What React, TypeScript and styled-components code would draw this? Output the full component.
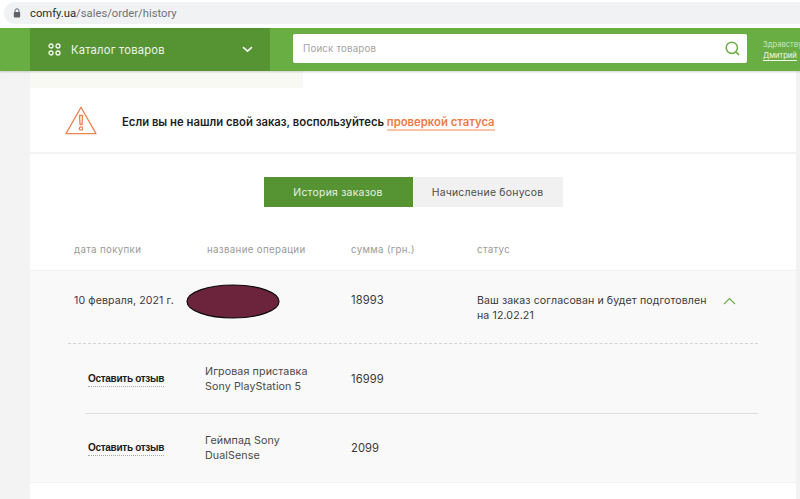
import React from "react";
import styled, { createGlobalStyle } from "styled-components";

const Global = createGlobalStyle`
  html, body { margin: 0; padding: 0; background: #fff; overflow: hidden; }
  * { box-sizing: border-box; }
  body { font-family: Inter, "Noto Sans", sans-serif; }
`;

const Page = styled.div`
  width: 800px;
  height: 499px;
  display: flex;
  flex-direction: column;
  overflow: hidden;
`;

const BrowserBar = styled.div`
  height: 28px;
  flex: none;
  padding: 2px 0 4px 4px;
  background: #fff;
`;

const AddressPill = styled.div`
  height: 22px;
  display: flex;
  align-items: center;
  gap: 5px;
  padding-left: 10px;
  background: #f0f2f4;
  border-radius: 11px 0 0 11px;
  font-family: Roboto, Inter, sans-serif;
  font-size: 11.25px;
  letter-spacing: 0;
  color: #6e7276;
`;

const LockIcon = styled.svg`
  margin-left: -1px;
  margin-right: 4px;
  flex: none;
`;

const Host = styled.span`
  color: #2a2c2e;
`;

const Header = styled.header`
  height: 43px;
  flex: none;
  display: flex;
  padding-left: 30px;
  background: #68ae42;
  box-shadow: 0 1px 2px rgba(0, 0, 0, 0.18);
  position: relative;
  z-index: 1;
`;

const Catalog = styled.div`
  width: 240px;
  flex: none;
  display: flex;
  align-items: center;
  padding: 0 17px 0 18px;
  background: #559333;
  color: #eef5ea;
  font-size: 11.2px;
  letter-spacing: 0.2px;
`;

const CatalogLabel = styled.span`
  margin-left: 10px;
  flex: 1;
`;

const SearchBox = styled.div`
  width: 454px;
  height: 29px;
  flex: none;
  margin: 6px 0 0 23px;
  display: flex;
  align-items: center;
  justify-content: space-between;
  padding: 0 7px 0 10px;
  background: #fff;
  border-radius: 2px;
  color: #a4a4a4;
  font-size: 9.7px;
  letter-spacing: 0.2px;
`;

const Greeting = styled.div`
  margin: 11px 0 0 16px;
  font-size: 7.6px;
  line-height: 11px;
  white-space: nowrap;
  color: #cfe5c3;
`;

const UserName = styled.div`
  color: #f2f8ee;
  text-decoration: underline;
  text-underline-offset: 1.5px;
`;

const Body = styled.div`
  flex: 1;
  display: flex;
  min-height: 0;
`;

const Gutter = styled.div`
  width: 30px;
  background: #f3f3f3;
`;

const Main = styled.main`
  width: 766px;
  background: #fff;
  display: flex;
  flex-direction: column;
`;

const Scroll = styled.div`
  width: 4px;
  background: #f2f2f2;
`;

const Crumb = styled.div`
  width: 273px;
  height: 17px;
  flex: none;
  background: #f9f9f4;
`;

const Notice = styled.div`
  height: 66px;
  flex: none;
  display: flex;
  align-items: center;
  padding: 6px 0 2px 35px;
  border-bottom: 2px solid #f3f3f3;
  font-size: 11.3px;
  font-weight: 600;
  color: #1f1f1f;
`;

const NoticeIcon = styled.svg`
  margin-bottom: 4px;
  flex: none;
`;

const NoticeText = styled.span`
  margin-left: 25px;
`;

const StatusLink = styled.a`
  color: #ef7a45;
  border-bottom: 2px solid #f9c4ab;
`;

const Tabs = styled.div`
  display: flex;
  justify-content: center;
  margin: 23px 0 0 3px;
  padding-right: 3px;
`;

const Tab = styled.div<{ $active?: boolean }>`
  width: ${(p) => (p.$active ? "149px" : "150px")};
  height: 30px;
  display: flex;
  align-items: center;
  justify-content: center;
  font-size: 10.4px;
  letter-spacing: 0.25px;
  color: ${(p) => (p.$active ? "#e8f2e2" : "#4c4c4c")};
  background: ${(p) => (p.$active ? "#559333" : "#f1f1f1")};
`;

const Columns = styled.div`
  display: grid;
  grid-template-columns: 133px 144px 126px 1fr;
`;

const TableHead = styled(Columns)`
  height: 64px;
  flex: none;
  padding: 37px 0 0 44px;
  font-size: 9.7px;
  letter-spacing: 0.35px;
  color: #9a9a9a;
  border-bottom: 1px solid #f0f0f0;
`;

const OrderPanel = styled.section`
  height: 212px;
  flex: none;
  background: #f9f9f9;
  border-bottom: 1px solid #f2f2f2;
`;

const OrderRow = styled(Columns)`
  height: 73px;
  margin: 0 38px;
  padding: 22px 0 0 6px;
  align-items: start;
  font-size: 10.6px;
  line-height: 15px;
  letter-spacing: 0.1px;
  color: #3a3a3a;
  border-bottom: 1px dashed #d4d4d4;
`;

const NameCell = styled.div`
  height: 35px;
  margin-top: -9px;
`;

const Redaction = styled.svg`
  margin-left: -21px;
  display: block;
`;

const Amount = styled.div`
  font-size: 11.2px;
`;

const StatusCell = styled.div`
  position: relative;
  white-space: nowrap;
`;

const Chevron = styled.svg`
  position: absolute;
  left: 246px;
  top: 4px;
`;

const Item = styled(Columns)<{ $last?: boolean }>`
  height: ${(p) => (p.$last ? "69px" : "70px")};
  margin: 0 38px 0 55px;
  padding-bottom: ${(p) => (p.$last ? "2px" : "0")};
  grid-template-columns: 120px 146px 1fr;
  align-items: center;
  font-size: 10.7px;
  letter-spacing: 0.1px;
  color: #4a4a4a;
  border-bottom: ${(p) => (p.$last ? "none" : "1px solid #dedede")};
`;

const ReviewCell = styled.div`
  padding-left: 3px;
`;

const Review = styled.a`
  font-family: "Liberation Sans", Arial, sans-serif;
  font-size: 10px;
  font-weight: 700;
  letter-spacing: -0.3px;
  color: #1c1c1c;
  padding-bottom: 2px;
  border-bottom: 1px dotted #a8a8a8;
`;

const ItemName = styled.div`
  line-height: 15px;
`;

const ItemPrice = styled.div`
  font-size: 11.2px;
  color: #3a3a3a;
`;

export default function App() {
  return (
    <Page>
      <Global />
      <BrowserBar>
        <AddressPill>
          <LockIcon width="8" height="10" viewBox="0 0 8 10">
            <path d="M2 4V2.8a2 2 0 0 1 4 0V4" fill="none" stroke="#5f6368" strokeWidth="1" />
            <rect x="0.8" y="4" width="6.4" height="5.4" rx="0.8" fill="#5f6368" />
          </LockIcon>
          <span>
            <Host>comfy.ua</Host>/sales/order/history
          </span>
        </AddressPill>
      </BrowserBar>
      <Header>
        <Catalog>
          <svg width="13" height="13" viewBox="0 0 13 13" fill="none" stroke="#f3f8f0" strokeWidth="1.3">
            <circle cx="3" cy="3" r="2" />
            <circle cx="10" cy="3" r="2" />
            <circle cx="3" cy="10" r="2" />
            <circle cx="10" cy="10" r="2" />
          </svg>
          <CatalogLabel>Каталог товаров</CatalogLabel>
          <svg width="11" height="7" viewBox="0 0 11 7" fill="none" stroke="#f3f8f0" strokeWidth="1.6">
            <path d="M1 1.2l4.5 4 4.5-4" />
          </svg>
        </Catalog>
        <SearchBox>
          Поиск товаров
          <svg width="15" height="15" viewBox="0 0 15 15" fill="none" stroke="#68ae42" strokeWidth="1.5">
            <circle cx="6.8" cy="6.8" r="5.6" />
            <path d="M10.9 10.9l3.1 3.1" strokeWidth="1.7" />
          </svg>
        </SearchBox>
        <Greeting>
          Здравствуйте,
          <UserName>Дмитрий</UserName>
        </Greeting>
      </Header>
      <Body>
        <Gutter />
        <Main>
          <Crumb />
          <Notice>
            <NoticeIcon width="32" height="29" viewBox="0 0 32 29" fill="none" stroke="#f0824f" strokeWidth="1.3" strokeLinejoin="round">
              <path d="M16 1.2L1 27.6h30z" />
              <path d="M14.5 9.5h3l-.5 9h-2z" />
              <circle cx="16" cy="22.5" r="1.7" />
            </NoticeIcon>
            <NoticeText>
              Если вы не нашли свой заказ, воспользуйтесь <StatusLink>проверкой статуса</StatusLink>
            </NoticeText>
          </Notice>
          <Tabs>
            <Tab $active>История заказов</Tab>
            <Tab>Начисление бонусов</Tab>
          </Tabs>
          <TableHead>
            <div>дата покупки</div>
            <div>название операции</div>
            <div>сумма (грн.)</div>
            <div>статус</div>
          </TableHead>
          <OrderPanel>
            <OrderRow>
              <div>10 февраля, 2021 г.</div>
              <NameCell>
                <Redaction width="94" height="35" viewBox="0 0 94 35">
                  <ellipse cx="47" cy="17.5" rx="46" ry="16.5" fill="#6c233c" stroke="#0c0c0c" strokeWidth="1.2" />
                </Redaction>
              </NameCell>
              <Amount>18993</Amount>
              <StatusCell>
                Ваш заказ согласован и будет подготовлен
                <br />
                на 12.02.21
                <Chevron width="13" height="8" viewBox="0 0 13 8" fill="none" stroke="#68ae42" strokeWidth="1.1">
                  <path d="M1 7l5.5-5.5L12 7" />
                </Chevron>
              </StatusCell>
            </OrderRow>
            <Item>
              <ReviewCell>
                <Review>Оставить отзыв</Review>
              </ReviewCell>
              <ItemName>
                Игровая приставка
                <br />
                Sony PlayStation 5
              </ItemName>
              <ItemPrice>16999</ItemPrice>
            </Item>
            <Item $last>
              <ReviewCell>
                <Review>Оставить отзыв</Review>
              </ReviewCell>
              <ItemName>
                Геймпад Sony
                <br />
                DualSense
              </ItemName>
              <ItemPrice>2099</ItemPrice>
            </Item>
          </OrderPanel>
        </Main>
        <Scroll />
      </Body>
    </Page>
  );
}
